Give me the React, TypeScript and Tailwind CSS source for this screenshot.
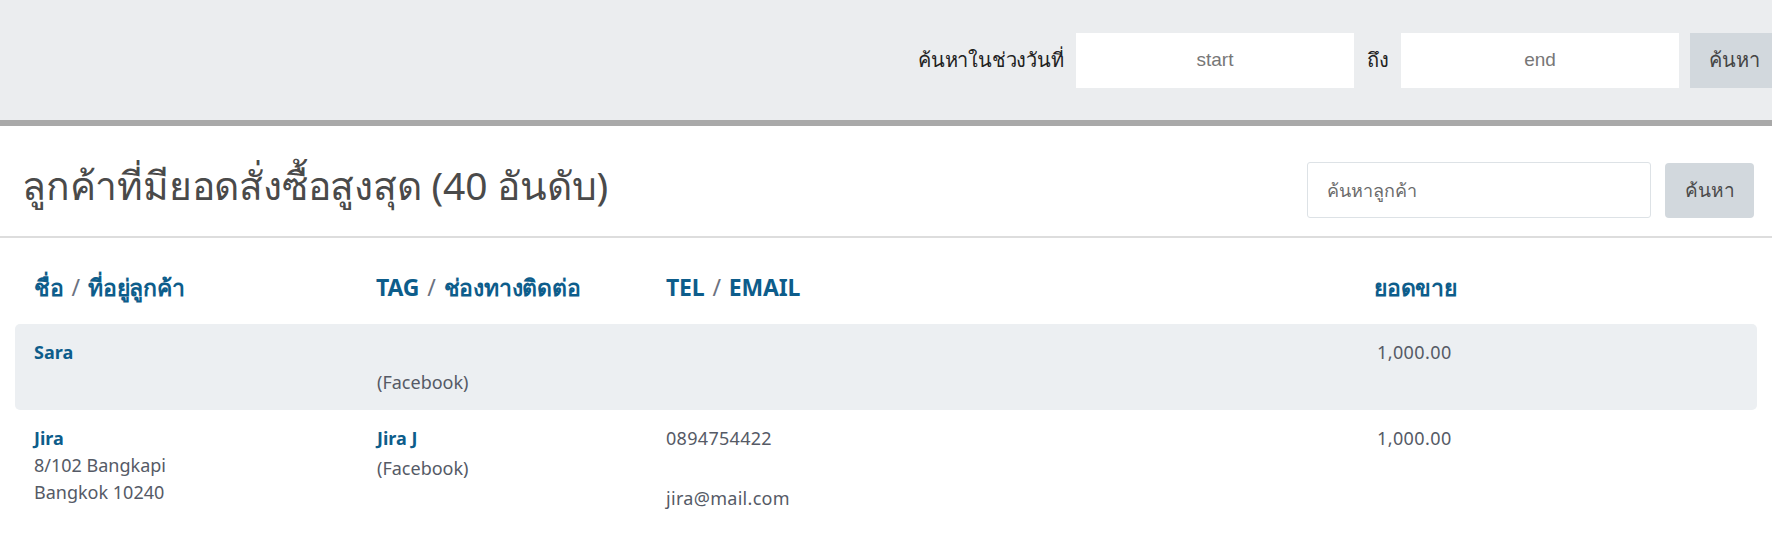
import React from 'react'

type Row = {
    name: string
    address: string[]
    tagName: string
    channel: string
    tel: string
    email: string
    total: string
}

const rows: Row[] = [
    { name: 'Sara', address: [], tagName: '', channel: '(Facebook)', tel: '', email: '', total: '1,000.00' },
    {
        name: 'Jira',
        address: ['8/102 Bangkapi', 'Bangkok 10240'],
        tagName: 'Jira J',
        channel: '(Facebook)',
        tel: '0894754422',
        email: 'jira@mail.com',
        total: '1,000.00',
    },
]

const cols = 'grid grid-cols-[341px_290px_710px_1fr]'

const Slash = () => <span className="text-[#6b7280] font-normal mx-[8px]">/</span>

export default function App() {
    return (
        <div className="w-[1772px] h-[533px] overflow-hidden bg-white font-['Noto_Sans','Liberation_Sans',sans-serif]">

            {/* date range bar */}
            <div className="h-[120px] bg-[#ebedef] border-b-[6px] border-[#a9a9a9] box-content flex items-center">
                <div className="flex items-center ml-[918px] w-[900px] shrink-0 font-['Liberation_Sans',sans-serif]">
                    <span className="text-[20px] text-[#222] w-[150px] tracking-[-0.2px]">ค้นหาในช่วงวันที่</span>
                    <input
                        placeholder="start"
                        className="w-[278px] h-[55px] ml-[8px] bg-white text-center text-[19px] placeholder:text-[#777] outline-none"
                    />
                    <span className="text-[20px] text-[#222] w-[47px] text-center">ถึง</span>
                    <input
                        placeholder="end"
                        className="w-[278px] h-[55px] bg-white text-center text-[19px] placeholder:text-[#777] outline-none"
                    />
                    <button className="ml-[11px] w-[100px] h-[55px] bg-[#d2d8dd] text-[20px] text-[#444] text-left pl-[19px]">
                        ค้นหา
                    </button>
                </div>
            </div>

            {/* title + customer search */}
            <div className="h-[112px] border-b-2 border-[#dddddd] flex items-center justify-between pl-[22px] pr-[18px] pt-[18px]">
                <h1 className="text-[39px] text-[#4a4a4a] font-normal tracking-[-0.2px] pb-[10px]">
                    ลูกค้าที่มียอดสั่งซื้อสูงสุด (40 อันดับ)
                </h1>
                <div className="flex items-center gap-[14px]">
                    <input
                        placeholder="ค้นหาลูกค้า"
                        className="w-[344px] h-[56px] border border-[#dde2e6] rounded-[3px] px-[19px] text-[18px] placeholder:text-[#6b6b6b] outline-none"
                    />
                    <button className="w-[89px] h-[55px] bg-[#d2d8dd] rounded-[4px] text-[19px] text-[#4a4a4a]">
                        ค้นหา
                    </button>
                </div>
            </div>

            {/* table */}
            <div className="px-[15px] text-[18px] leading-[27px] text-[#555a66]">
                <div className={`${cols} h-[86px] items-center pt-[12px] font-bold text-[#0d5d8b] text-[23px] tracking-[-0.2px]`}>
                    <div className="pl-[19px]">ชื่อ<Slash />ที่อยู่ลูกค้า</div>
                    <div className="pl-[20px]">TAG<Slash />ช่องทางติดต่อ</div>
                    <div className="pl-[20px]">TEL<Slash />EMAIL</div>
                    <div className="pl-[18px]">ยอดขาย</div>
                </div>

                {rows.map((r, i) => (
                    <div
                        key={r.name}
                        className={`${cols} min-h-[86px] gap-x-[1px] ${i % 2 === 0 ? 'bg-[#eceff2] rounded-[5px]' : ''}`}
                    >
                        <div className="pl-[19px] pt-[15px] pb-[12px]">
                            <div className="font-bold text-[#0d5d8b]">{r.name}</div>
                            {r.address.map(a => <div key={a}>{a}</div>)}
                        </div>
                        <div className="pl-[20px] pt-[15px]">
                            <div className="font-bold text-[#0d5d8b] h-[27px]">{r.tagName}</div>
                            <div className="mt-[3px]">{r.channel}</div>
                        </div>
                        <div className="pl-[18px] pt-[15px] tracking-[0.3px]">
                            <div className="h-[27px]">{r.tel}</div>
                            <div className="mt-[33px]">{r.email}</div>
                        </div>
                        <div className="pl-[18px] pt-[15px] tracking-[0.4px]">{r.total}</div>
                    </div>
                ))}
            </div>
        </div>
    )
}
